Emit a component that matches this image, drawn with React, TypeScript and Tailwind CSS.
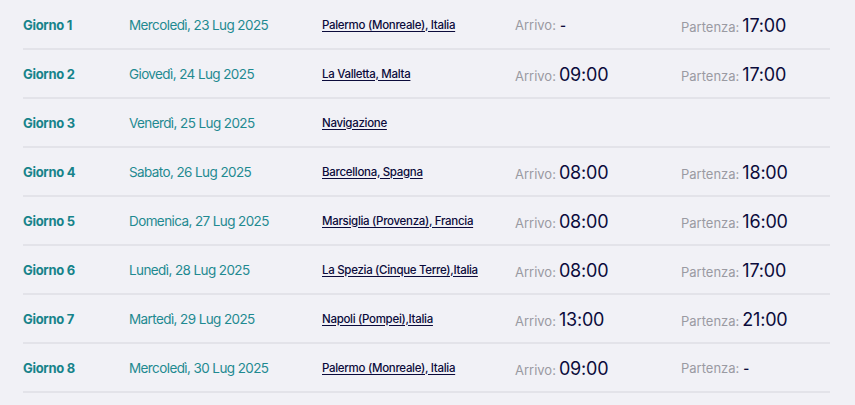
const days = [
  { day: "Giorno 1", date: "Mercoledì, 23 Lug 2025", place: "Palermo (Monreale), Italia", arr: "-", dep: "17:00" },
  { day: "Giorno 2", date: "Giovedì, 24 Lug 2025", place: "La Valletta, Malta", arr: "09:00", dep: "17:00" },
  { day: "Giorno 3", date: "Venerdì, 25 Lug 2025", place: "Navigazione", arr: null, dep: null },
  { day: "Giorno 4", date: "Sabato, 26 Lug 2025", place: "Barcellona, Spagna", arr: "08:00", dep: "18:00" },
  { day: "Giorno 5", date: "Domenica, 27 Lug 2025", place: "Marsiglia (Provenza), Francia", arr: "08:00", dep: "16:00" },
  { day: "Giorno 6", date: "Lunedì, 28 Lug 2025", place: "La Spezia (Cinque Terre),Italia", arr: "08:00", dep: "17:00" },
  { day: "Giorno 7", date: "Martedì, 29 Lug 2025", place: "Napoli (Pompei),Italia", arr: "13:00", dep: "21:00" },
  { day: "Giorno 8", date: "Mercoledì, 30 Lug 2025", place: "Palermo (Monreale), Italia", arr: "09:00", dep: "-" },
];

function Time({ label, value }: { label: string; value: string | null }) {
  if (value === null) return <div />;
  const dash = value === "-";
  return (
    <div className="flex items-baseline">
      <span className="text-[13px] text-[#9a9aa2]">{label}:</span>
      <span
        className={
          dash
            ? "ml-1 text-[13px] font-semibold text-[#0b0b3b]"
            : "ml-[3px] text-[18px] tracking-[-0.2px] text-[#0b0b3b]"
        }
      >
        {value}
      </span>
    </div>
  );
}

export default function App() {
  return (
    <div
      className="min-h-[405px] w-full bg-[#f1f1f6] pl-[23px] pr-[25px] pt-[1px]"
      style={{ fontFamily: "Inter, 'Noto Sans', sans-serif" }}
    >
      {days.map((d) => (
        <div
          key={d.day}
          className="grid h-[49px] grid-cols-[106px_193px_193px_166px_1fr] items-center border-b-2 border-[#e3e3e9] pt-[2px]"
        >
          <div className="text-[13px] font-bold tracking-[-0.3px] text-[#16838a]">{d.day}</div>
          <div className="text-[13.5px] tracking-[-0.6px] text-[#1f8a91]">{d.date}</div>
          <div className="-mt-1.5">
            <a className="text-[11.5px] font-medium tracking-[-0.3px] text-[#0b0b3b] underline underline-offset-2">
              {d.place}
            </a>
          </div>
          <Time label="Arrivo" value={d.arr} />
          <Time label="Partenza" value={d.dep} />
        </div>
      ))}
    </div>
  );
}
